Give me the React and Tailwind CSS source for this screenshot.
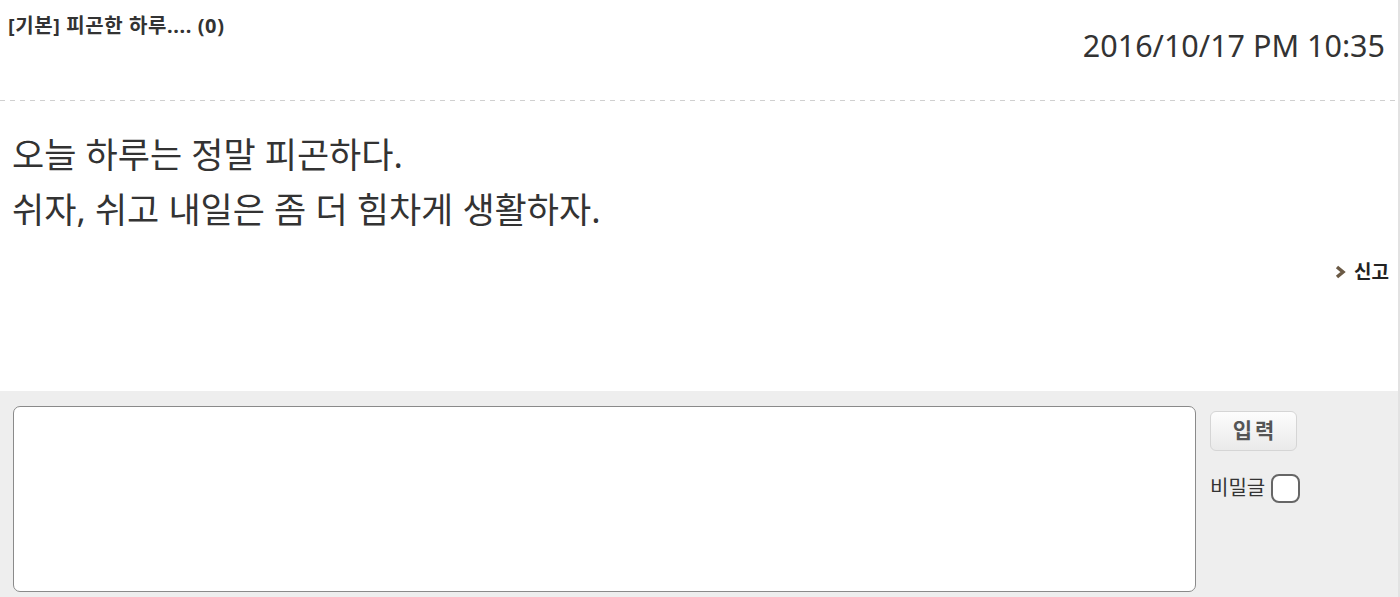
export default function App() {
  return (
    <div className="w-[1400px] h-[597px] bg-white overflow-hidden flex flex-col" style={{ fontFamily: '"Noto Sans", "Noto Sans CJK KR", sans-serif' }}>
      <div className="flex-1 flex flex-col border-r-2 border-[#e2e2e2]">
        <div className="h-[100px] flex justify-between">
          <div className="pl-[8px] pt-[12px] text-[20px] font-bold text-[#333] leading-[28px] tracking-[0.6px]">[기본] 피곤한 하루.... (0)</div>
          <div className="pr-[13px] pt-[24px] text-[30.5px] text-[#333] leading-[42px]">2016/10/17 PM 10:35</div>
        </div>
        <div className="h-px bg-[repeating-linear-gradient(90deg,#d0d0d0_0px,#d0d0d0_5px,transparent_5px,transparent_10px)]" />
        <div className="pl-[12px] pt-[26px] text-[35px] text-[#333] leading-[55px]">
          <div>오늘 하루는 정말 피곤하다.</div>
          <div>쉬자, 쉬고 내일은 좀 더 힘차게 생활하자.</div>
        </div>
        <div className="flex justify-end items-center pr-[9px] pt-[22px] gap-[8px]">
          <svg width="11" height="14" viewBox="0 0 11 14"><path d="M2 2 L8 7 L2 12" fill="none" stroke="#6b5a45" strokeWidth="3.5" /></svg>
          <span className="text-[19px] font-bold text-[#222] leading-[26px]">신고</span>
        </div>
      </div>
      <div className="h-[206px] bg-[#eeeeee] flex pl-[13px] pt-[15px] gap-[14px] border-r-2 border-[#e2e2e2]">
        <div className="w-[1183px] h-[186px] bg-white border-[1.5px] border-[#8a8a8a] rounded-[7px]" />
        <div className="flex flex-col pt-[5px]">
          <div className="w-[87px] h-[40px] rounded-[6px] border border-[#d5d5d5] bg-[linear-gradient(#fdfdfd,#eaeaea)] flex items-center justify-center text-[21px] font-bold text-[#555] tracking-[3px] pl-[3px]">입력</div>
          <div className="flex items-center mt-[22px] gap-[6px]">
            <span className="text-[20px] text-[#333]">비밀글</span>
            <div className="w-[29px] h-[29px] rounded-[8px] border-2 border-[#666] bg-white" />
          </div>
        </div>
      </div>
    </div>
  );
}
